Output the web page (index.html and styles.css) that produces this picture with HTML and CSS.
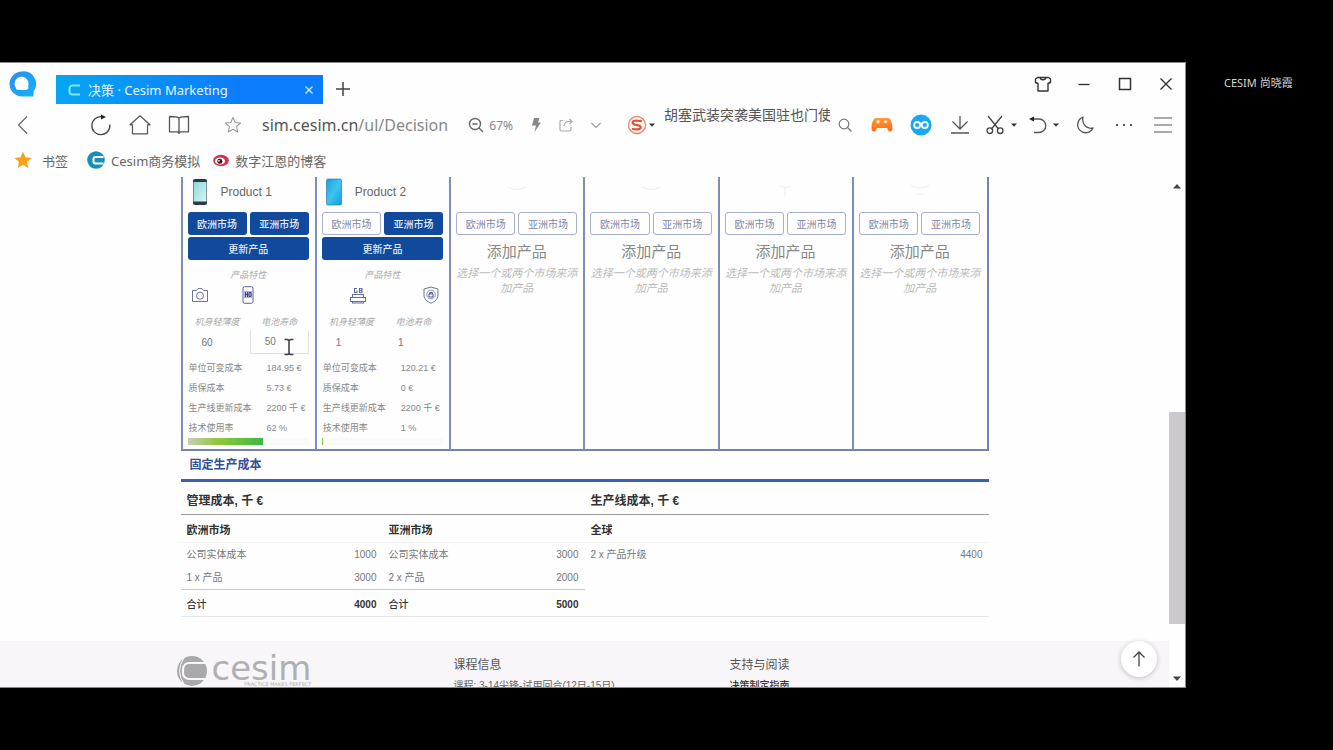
FILE: index.html
```html
<!DOCTYPE html>
<html lang="zh-CN">
<head>
<meta charset="utf-8">
<meta name="viewport" content="width=device-width, initial-scale=1">
<title>决策 · Cesim Marketing</title>
<link rel="stylesheet" href="styles.css">
</head>
<body>
<div class="window">
  <header class="titlebar">
    <svg class="browser-logo" viewBox="0 0 28 28" aria-hidden="true"><defs><linearGradient id="qg" x1="0" y1="0" x2="1" y2="1"><stop offset="0" stop-color="#2c8cf0"/><stop offset="1" stop-color="#12b4f6"/></linearGradient></defs><path d="M14 1.500a12.500 12.500 0 0 0 0 25h11.500v-5A12.500 12.500 0 0 0 14 1.500z" fill="url(#qg)"/><path d="M8 18a7 7 0 1 1 12-1.500c1 .5.500 3.500-2.500 3.500H10.500c-1.500 0-2.500-.7-2.500-2z" fill="#fff"/></svg>
    <div class="tab">
      <svg class="tab-icon" viewBox="0 0 14 14" aria-hidden="true"><path d="M13 2.500H5.500a3 3 0 0 0-3 3v3a3 3 0 0 0 3 3H13" fill="none" stroke="#7fe6ee" stroke-width="2"/></svg>
      <span class="tab-title">决策 · Cesim Marketing</span>
      <button class="tab-close" aria-label="关闭标签"><svg class="i10" viewBox="0 0 10 10"><path d="M1.500 1.500l7 7M8.500 1.500l-7 7" stroke="#d5ecff" stroke-width="1.300"/></svg></button>
    </div>
    <button class="tool tab-new" aria-label="新标签"><svg class="i16" viewBox="0 0 16 16"><path d="M8 1v14M1 8h14" stroke="#444" stroke-width="1.500"/></svg></button>
    <div class="window-controls">
      <button class="tool" aria-label="皮肤"><svg class="i18" viewBox="0 0 18 18"><path d="M6 2.500H3.500L1.500 4v3.500L4 8.500v7.500h10V8.500l2.500-1V4l-2-1.500H12c-.5 3-5.500 3-6 0zM6 2.500h6" fill="none" stroke="#333" stroke-width="1.400" stroke-linejoin="round"/></svg></button>
      <button class="tool" aria-label="最小化"><svg class="i14" viewBox="0 0 14 14"><path d="M1.500 7.500h11" stroke="#333" stroke-width="1.400"/></svg></button>
      <button class="tool" aria-label="最大化"><svg class="i14" viewBox="0 0 14 14"><rect x="1.500" y="1.500" width="11" height="11" fill="none" stroke="#333" stroke-width="1.500"/></svg></button>
      <button class="tool" aria-label="关闭"><svg class="i14" viewBox="0 0 14 14"><path d="M1.500 1.500l11 11M12.500 1.500l-11 11" stroke="#333" stroke-width="1.400"/></svg></button>
    </div>
  </header>

  <nav class="toolbar">
    <div class="nav-back"><button class="tool" aria-label="后退"><svg class="i20" viewBox="0 0 20 20"><path d="M14 1.500L5.500 10l8.500 8.500" fill="none" stroke="#666" stroke-width="1.200"/></svg></button></div>
    <button class="tool" aria-label="刷新"><svg class="i22" viewBox="0 0 22 22"><path d="M19.800 10.500A9 9 0 1 1 12.500 2.800" fill="none" stroke="#444" stroke-width="1.300"/><path d="M11 .5l5 2.500-5 2.500z" fill="#222"/></svg></button>
    <button class="tool" aria-label="主页"><svg class="i22" viewBox="0 0 22 22"><path d="M1 10.800L11 1.800l10 9h-2.500v9h-15v-9z" fill="none" stroke="#555" stroke-width="1.200" stroke-linejoin="round"/></svg></button>
    <button class="tool" aria-label="阅读"><svg class="i22" viewBox="0 0 22 22"><path d="M11 4C9.500 2.500 7 2.500 1.500 2.500v15.300h8l1.500 1.500 1.500-1.500h8V2.500C15 2.500 12.500 2.500 11 4zM11 4v15" fill="none" stroke="#555" stroke-width="1.300" stroke-linejoin="round"/></svg></button>
    <div class="address">
      <button class="tool" aria-label="收藏"><svg class="i18" viewBox="0 0 18 18"><path d="M9 1.500l2.200 5 5.300.5-4 3.600 1.200 5.400L9 13.200 4.300 16l1.200-5.400-4-3.600 5.300-.5z" fill="none" stroke="#999" stroke-width="1.100" stroke-linejoin="round"/></svg></button>
      <div class="url" role="textbox" aria-label="网址" tabindex="0">sim.cesim.cn<span class="url-path">/ul/Decision</span></div>
      <button class="zoom-level"><svg class="i16" viewBox="0 0 16 16"><circle cx="7" cy="7" r="5.500" fill="none" stroke="#666" stroke-width="1.400"/><path d="M4.500 7h5M11 11l4 4" stroke="#666" stroke-width="1.400"/></svg>67%</button>
      <button class="tool tool-narrow" aria-label="极速"><svg class="i14" viewBox="0 0 14 14"><path d="M5 0h5.500L9 4.500h3L5.500 14 7 7.500H3z" fill="#888"/></svg></button>
      <button class="tool tool-narrow" aria-label="分享"><svg class="i14" viewBox="0 0 14 14"><path d="M4 2.500H2A1 1 0 0 0 1 3.500v8a1.500 1.500 0 0 0 1.500 1.500h8a1.500 1.500 0 0 0 1.500-1.500V9M5 8c0-3 2-4.500 5-4.500h3M10.500 1L13 3.500 10.500 6" fill="none" stroke="#aaa" stroke-width="1.200"/></svg></button>
      <button class="tool tool-narrow" aria-label="展开"><svg class="i10" viewBox="0 0 10 10"><path d="M.5 3L5 7.500 9.500 3" fill="none" stroke="#999" stroke-width="1.100"/></svg></button>
    </div>
    <div class="search">
      <button class="search-engine" aria-label="搜索引擎"><svg class="i20" viewBox="0 0 20 20"><circle cx="10" cy="10" r="8.500" fill="#fff" stroke="#f0806a" stroke-width="1.300"/><path d="M15 6.300c-2-.6-4-.6-6-.6-4 0-4.500 3-1 3.900l3.500.8c3.500 1 3 3.900-1.500 3.900-2 0-3.500 0-5-.6" fill="none" stroke="#e8512f" stroke-width="2.200"/></svg><svg class="i6" viewBox="0 0 6 6"><path d="M0 1.500h6L3 4.800z" fill="#333"/></svg></button>
      <input class="search-input" type="text" aria-label="搜索" value="胡塞武装突袭美国驻也门使馆">
      <button class="tool tool-narrow" aria-label="查找"><svg class="i14" viewBox="0 0 14 14"><circle cx="6" cy="6" r="4.800" fill="none" stroke="#777" stroke-width="1.200"/><path d="M9.500 9.500l4 4" stroke="#777" stroke-width="1.200"/></svg></button>
    </div>
    <div class="extras">
      <button class="tool" aria-label="游戏"><svg class="i22" viewBox="0 0 22 22"><defs><linearGradient id="gg" x1="0" y1="0" x2="0" y2="1"><stop offset="0" stop-color="#ff9a3c"/><stop offset="1" stop-color="#ff6a12"/></linearGradient></defs><path d="M5 4h12c3 0 4.500 6 4.500 10.500 0 3.500-3 4-4.500 1.500l-1-2H6l-1 2C3.500 18.500.5 18 .5 14.500.5 10 2 4 5 4z" fill="url(#gg)"/><circle cx="7" cy="7.800" r="1.700" fill="#fff0dc"/><circle cx="14.500" cy="7.800" r="1.500" fill="#fff0dc"/></svg></button>
      <button class="tool" aria-label="插件"><svg class="i22" viewBox="0 0 22 22"><circle cx="11" cy="11" r="10.500" fill="#18a8f6"/><circle cx="7.200" cy="11" r="3" fill="none" stroke="#fff" stroke-width="1.800"/><circle cx="14.800" cy="11" r="3" fill="none" stroke="#fff" stroke-width="1.800"/></svg></button>
      <button class="tool" aria-label="下载"><svg class="i20" viewBox="0 0 20 20"><path d="M10 1v13M2.500 6.500L10 14l7.500-7.500M1 18h18" fill="none" stroke="#555" stroke-width="1.300"/></svg></button>
      <button class="tool tool-wide" aria-label="截图"><svg class="i20" viewBox="0 0 20 20"><path d="M3 1l10.500 13M17 1L6.500 14" stroke="#444" stroke-width="1.300"/><circle cx="4.800" cy="15.700" r="2.800" fill="none" stroke="#444" stroke-width="1.300"/><circle cx="15.200" cy="15.700" r="2.800" fill="none" stroke="#444" stroke-width="1.300"/></svg><svg class="i6" viewBox="0 0 6 6"><path d="M0 1.500h6L3 4.800z" fill="#333"/></svg></button>
      <button class="tool tool-wide" aria-label="恢复"><svg class="i18" viewBox="0 0 18 18"><path d="M2 3h8a6.500 6.500 0 0 1 0 13.500H5" fill="none" stroke="#555" stroke-width="1.300"/><path d="M0 3l5-2.400v4.800z" fill="#222"/></svg><svg class="i6" viewBox="0 0 6 6"><path d="M0 1.500h6L3 4.800z" fill="#333"/></svg></button>
      <button class="tool" aria-label="夜间"><svg class="i18" viewBox="0 0 18 18"><path d="M7 1.200A8 8 0 1 0 17 12C11 13.500 5.500 8 7 1.200z" fill="none" stroke="#555" stroke-width="1.300" stroke-linejoin="round"/></svg></button>
      <button class="tool" aria-label="更多"><svg class="i18" viewBox="0 0 18 18"><path d="M1 8h2v2H1zM8 8h2v2H8zM15 8h2v2h-2z" fill="#555"/></svg></button>
      <button class="tool" aria-label="菜单"><svg class="i18" viewBox="0 0 18 18"><path d="M0 2h18M0 9h18M0 16h18" stroke="#555" stroke-width="1.200"/></svg></button>
    </div>
  </nav>

  <nav class="bookmarks">
    <a class="bookmark" href="#"><svg class="i18" viewBox="0 0 18 18"><path d="M9 .8l2.500 5.500 6 .6-4.500 4 1.300 6L9 13.800 3.700 16.900l1.300-6-4.500-4 6-.6z" fill="#f9a11b"/></svg><span class="bookmark-first">书签</span></a>
    <a class="bookmark" href="#"><svg class="i18" viewBox="0 0 18 18"><circle cx="9" cy="9" r="8.800" fill="#1a8fb5"/><path d="M16.500 6H8.500a2 2 0 0 0-2 2v2.500a2 2 0 0 0 2 2h8" fill="none" stroke="#fff" stroke-width="2"/></svg><span>Cesim商务模拟</span></a>
    <a class="bookmark" href="#"><svg class="i16" viewBox="0 0 16 16"><ellipse cx="8" cy="8.500" rx="7.800" ry="5.800" fill="#d5304c"/><ellipse cx="7" cy="9" rx="5" ry="3.600" fill="#fff"/><circle cx="6.800" cy="9.200" r="2.500" fill="#42121c"/><circle cx="6" cy="8.800" r=".9" fill="#fff"/></svg><span>数字江恩的博客</span></a>
  </nav>

  <div class="viewport">
    <div class="page">
      <main class="content">
        <section class="board" aria-label="产品">
          <article class="product">
            <h2 class="product-name"><svg class="phone" viewBox="0 0 18 28"><defs><linearGradient id="p1" x1="0" y1="0" x2="1" y2="1"><stop offset="0" stop-color="#8fd8e2"/><stop offset="1" stop-color="#d8f4f4"/></linearGradient></defs><rect x="2" y="1" width="14" height="26" rx="2" fill="#2d3a42"/><rect x="2.500" y="4" width="13" height="19.500" fill="url(#p1)"/></svg>Product 1</h2>
            <div class="markets"><button class="market on">欧洲市场</button><button class="market on">亚洲市场</button></div>
            <button class="update">更新产品</button>
            <p class="feature-title">产品特性</p>
            <div class="features">
              <svg class="i18" viewBox="0 0 18 18"><path d="M1.500 4.500h4L7 2.500h4l1.500 2h4v11h-15z" fill="none" stroke="#7076a0" stroke-linejoin="round"/><circle cx="9" cy="9.700" r="3.500" fill="none" stroke="#7076a0"/></svg>
              <span></span>
              <svg class="i18" viewBox="0 0 18 18"><rect x="4" y=".7" width="10" height="16.600" rx="1.500" fill="none" stroke="#5b609c"/><path d="M5 5h8v7H5z" fill="#b4b7d8"/><path d="M6.500 6v5M6.500 8.500h2M8.500 6v5M10 6.500h2v4h-2z" fill="none" stroke="#343a80" stroke-width=".9"/></svg>
            </div>
            <div class="fields">
              <label class="field"><span>机身轻薄度</span><input type="text" value="60"></label>
              <label class="field active"><span>电池寿命</span><input type="text" value="50"><svg class="ibeam" viewBox="0 0 12 18"><path d="M1.500 1.500h3L6 2.500l1.500-1h3M6 2.500v13M1.500 16.500h3l1.500-1 1.500 1h3" fill="none" stroke="#444" stroke-width="1.600"/></svg></label>
            </div>
            <dl class="costs"><dt>单位可变成本</dt><dd>184.95 €</dd><dt>质保成本</dt><dd>5.73 €</dd><dt>生产线更新成本</dt><dd>2200 千 €</dd><dt>技术使用率</dt><dd>62 %</dd></dl>
            <progress class="usage" max="100" value="62" aria-label="技术使用率"></progress>
          </article>
          <article class="product">
            <h2 class="product-name"><svg class="phone" viewBox="0 0 18 28"><defs><linearGradient id="p2" x1="0" y1="0" x2="1" y2="1"><stop offset="0" stop-color="#18a2dc"/><stop offset=".5" stop-color="#3cc4f2"/><stop offset="1" stop-color="#149bdc"/></linearGradient></defs><rect x="1.500" y="1" width="15" height="26" rx="1.500" fill="url(#p2)" stroke="#1c6d98" stroke-width=".6"/></svg>Product 2</h2>
            <div class="markets"><button class="market">欧洲市场</button><button class="market on">亚洲市场</button></div>
            <button class="update">更新产品</button>
            <p class="feature-title">产品特性</p>
            <div class="features">
              <span></span>
              <svg class="i18" viewBox="0 0 18 18"><path d="M8 2.500H5.500v4H8v-2M10.500 2.500v4h2.500v-4zM10.500 4.500H13M3.500 8.500h11v3h-11zM1.500 11.500h15v4h-15zM3.500 15.500v1.500h11v-1.500" fill="none" stroke="#6469a0" stroke-width="1.100"/></svg>
              <span></span><span></span>
              <svg class="i18" viewBox="0 0 18 18"><path d="M9 1l7 2v6c0 4-3 6.500-7 8.200C5 15.500 2 13 2 9V3z" fill="none" stroke="#6c7399" stroke-linejoin="round"/><circle cx="9" cy="8.500" r="4.300" fill="none" stroke="#8d92b5"/><path d="M7 8h4v3H7zM7.700 8V6.500h2.600V8" fill="none" stroke="#4e5590"/></svg>
            </div>
            <div class="fields">
              <label class="field"><span>机身轻薄度</span><input type="text" value="1"></label>
              <label class="field"><span>电池寿命</span><input type="text" value="1"></label>
            </div>
            <dl class="costs"><dt>单位可变成本</dt><dd>120.21 €</dd><dt>质保成本</dt><dd>0 €</dd><dt>生产线更新成本</dt><dd>2200 千 €</dd><dt>技术使用率</dt><dd>1 %</dd></dl>
            <progress class="usage" max="100" value="1" aria-label="技术使用率"></progress>
          </article>
          <article class="product empty">
            <div class="slot"><svg class="i20" viewBox="0 0 20 20"><path d="M1 10q9 5 18 0" fill="none" stroke="#eee"/></svg></div>
            <div class="markets"><button class="market">欧洲市场</button><button class="market">亚洲市场</button></div>
            <h2 class="add">添加产品</h2><p class="hint">选择一个或两个市场来添加产品</p>
          </article>
          <article class="product empty">
            <div class="slot"><svg class="i20" viewBox="0 0 20 20"><path d="M1 10q9 5 18 0" fill="none" stroke="#eee"/></svg></div>
            <div class="markets"><button class="market">欧洲市场</button><button class="market">亚洲市场</button></div>
            <h2 class="add">添加产品</h2><p class="hint">选择一个或两个市场来添加产品</p>
          </article>
          <article class="product empty">
            <div class="slot"><svg class="i20" viewBox="0 0 20 20"><path d="M4 9q6 3 12 0M10 10v9" fill="none" stroke="#eee"/></svg></div>
            <div class="markets"><button class="market">欧洲市场</button><button class="market">亚洲市场</button></div>
            <h2 class="add">添加产品</h2><p class="hint">选择一个或两个市场来添加产品</p>
          </article>
          <article class="product empty">
            <div class="slot"><svg class="i20" viewBox="0 0 20 20"><path d="M1 8q9 6 18 0M6 17h8" fill="none" stroke="#eee"/></svg></div>
            <div class="markets"><button class="market">欧洲市场</button><button class="market">亚洲市场</button></div>
            <h2 class="add">添加产品</h2><p class="hint">选择一个或两个市场来添加产品</p>
          </article>
        </section>

        <h2 class="section-title">固定生产成本</h2>
        <section class="ledger">
          <div class="ledger-half">
            <h3 class="ledger-title">管理成本, 千 €</h3>
            <div class="ledger-tables">
              <table class="ledger-table">
                <thead><tr><th colspan="2">欧洲市场</th></tr></thead>
                <tbody><tr><td>公司实体成本</td><td>1000</td></tr><tr><td>1 x 产品</td><td>3000</td></tr></tbody>
                <tfoot><tr><td>合计</td><td>4000</td></tr></tfoot>
              </table>
              <table class="ledger-table">
                <thead><tr><th colspan="2">亚洲市场</th></tr></thead>
                <tbody><tr><td>公司实体成本</td><td>3000</td></tr><tr><td>2 x 产品</td><td>2000</td></tr></tbody>
                <tfoot><tr><td>合计</td><td>5000</td></tr></tfoot>
              </table>
            </div>
          </div>
          <div class="ledger-half">
            <h3 class="ledger-title">生产线成本, 千 €</h3>
            <table class="ledger-table">
              <thead><tr><th colspan="2">全球</th></tr></thead>
              <tbody><tr><td>2 x 产品升级</td><td>4400</td></tr></tbody>
            </table>
          </div>
        </section>
      </main>

      <footer class="footer">
        <div class="footer-inner">
          <div class="brand">
            <svg class="brand-mark" viewBox="0 0 32 32" aria-hidden="true"><circle cx="16" cy="16" r="15" fill="#a9a9ab"/><path d="M31 8H13a6 6 0 0 0-6 6v4a6 6 0 0 0 6 6h18" fill="none" stroke="#f8f6f9" stroke-width="2.200"/><path d="M8 3Q-1 16 8 29" fill="none" stroke="#f8f6f9" stroke-width="1"/></svg>
            <div class="brand-words"><span class="brand-name">cesim</span><span class="brand-tag">PRACTICE MAKES PERFECT</span></div>
          </div>
          <div class="footer-col"><h4>课程信息</h4><p>课程: 3-14尖锋-试用回合(12日-15日)</p></div>
          <div class="footer-col"><h4>支持与阅读</h4><p><a class="guide" href="#">决策制定指南</a></p></div>
        </div>
      </footer>
      <button class="to-top" aria-label="返回顶部"><svg class="i18" viewBox="0 0 18 18"><path d="M9 2v14.500M3.500 7.500L9 2l5.500 5.500" fill="none" stroke="#444" stroke-width="1.300"/></svg></button>
    </div>
    <div class="scrollbar" aria-hidden="true">
      <svg class="arrow" viewBox="0 0 16 18"><path d="M4 11.500L8 7l4 4.500z" fill="#444"/></svg>
      <span class="track-before"></span><span class="thumb"></span><span class="track-after"></span>
      <svg class="arrow" viewBox="0 0 16 18"><path d="M4 7.500h8L8 12z" fill="#444"/></svg>
    </div>
  </div>
</div>
<aside class="presenter">CESIM 尚晓霞</aside>
</body>
</html>
```
FILE: styles.css
```css
* {
  box-sizing: border-box;
}

body {
  margin: 0;
  height: 100vh;
  padding: 62px 0;
  display: grid;
  grid-template-columns: minmax(0, 1fr) 147px;
  background: #000;
  color: #555;
  font-family: "Noto Sans", "Noto Sans CJK SC", sans-serif;
  overflow: hidden;
}

h2, h3, h4, p, dl, dd {
  margin: 0;
}

button, input {
  font: inherit;
  color: inherit;
  border: 0;
  padding: 0;
  background: none;
}

svg {
  display: block;
  flex: none;
}

.i6 { width: 6px; height: 6px; }
.i10 { width: 10px; height: 10px; }
.i14 { width: 14px; height: 14px; }
.i16 { width: 16px; height: 16px; }
.i18 { width: 18px; height: 18px; }
.i20 { width: 20px; height: 20px; }
.i22 { width: 22px; height: 22px; }

.presenter {
  padding: 13px 0 0 38px;
  color: #d5d5d5;
  font-size: 11px;
  line-height: 16px;
}

.window {
  min-height: 0;
  display: flex;
  flex-direction: column;
  background: #fdfefd;
  border: solid #8a8a8a;
  border-width: 1px 1px 1px 0;
}

/* Title bar */
.titlebar {
  flex: none;
  height: 41px;
  display: flex;
  align-items: flex-end;
}

.browser-logo {
  width: 28px;
  height: 28px;
  margin: 0 20px 6px 8px;
}

.tab {
  width: 267px;
  height: 29px;
  padding: 0 9px 0 11px;
  display: flex;
  align-items: center;
  gap: 7px;
  background: linear-gradient(90deg, #06a6f2, #0b7cfc 70%);
  color: #e6f5ff;
  font-size: 13px;
}

.tab-icon {
  width: 14px;
  height: 14px;
}

.tab-title {
  flex: 1;
}

.tool {
  width: 39px;
  height: 30px;
  display: flex;
  align-items: center;
  justify-content: center;
}

.tool-narrow {
  width: 30px;
}

.tool-wide {
  width: 43px;
  gap: 6px;
}

.window-controls {
  margin-left: auto;
  display: flex;
  gap: 2px;
  align-self: center;
}

/* Toolbar */
.toolbar {
  flex: none;
  height: 42px;
  padding: 0 3px;
  display: flex;
  align-items: center;
}

.nav-back {
  width: 78px;
}

.address {
  flex: 1;
  margin-left: 15px;
  display: flex;
  align-items: center;
}

.url {
  flex: 1;
  padding-left: 10px;
  color: #555;
  font-size: 16px;
  line-height: 24px;
}

.url-path {
  color: #888;
}

.zoom-level {
  display: flex;
  align-items: center;
  gap: 5px;
  margin-right: 8px;
  color: #888;
  font-size: 12px;
}

.search {
  width: 251px;
  padding-left: 16px;
  display: flex;
  align-items: center;
}

.search-engine {
  display: flex;
  align-items: center;
  gap: 2px;
  margin-right: 9px;
}

.search-input {
  flex: none;
  width: 166px;
  height: 42px;
  padding-bottom: 22px;
  font-size: 14px;
}

.extras {
  display: flex;
}

/* Bookmarks */
.bookmarks {
  flex: none;
  height: 31px;
  padding: 0 14px 3px;
  display: flex;
  align-items: center;
  gap: 13px;
  font-size: 13px;
}

.bookmark {
  display: flex;
  align-items: center;
  gap: 6px;
  color: #666;
  text-decoration: none;
}

.bookmark-first {
  padding: 0 6px 0 4px;
}

/* Page area */
.viewport {
  flex: 1;
  min-height: 0;
  display: flex;
  font-family: "Liberation Sans", "Noto Sans CJK SC", sans-serif;
}

.page {
  position: relative;
  flex: 1;
  overflow: hidden;
}

.content {
  max-width: 808px;
  margin: 0 auto;
}

.board {
  display: grid;
  grid-template-columns: repeat(6, 1fr);
  border: solid #7484ae;
  border-width: 0 2px 2px 0;
}

.product {
  min-width: 0;
  padding: 0 6px 4px 5px;
  border-left: 2px solid #7c8fb8;
  font-size: 9px;
}

.product-name {
  height: 30px;
  display: flex;
  align-items: center;
  gap: 12px;
  padding-left: 3px;
  color: #666;
  font-size: 12px;
  font-weight: 400;
}

.phone {
  width: 18px;
  height: 28px;
}

.slot {
  height: 30px;
  display: flex;
  justify-content: center;
}

.markets {
  margin-top: 5px;
  display: grid;
  grid-template-columns: 1fr 1fr;
  gap: 3px;
}

.market {
  height: 23px;
  border: 1px solid #a6afcb;
  border-radius: 3px;
  background: #fff;
  color: #8187a6;
  font-size: 10px;
}

.market.on, .update {
  border: 0;
  background: #11499c;
  color: #dfe9fb;
  font-weight: 500;
}

.update {
  width: 100%;
  height: 23px;
  margin-top: 2px;
  display: block;
  border-radius: 3px;
  font-size: 10px;
}

.feature-title {
  margin-top: 7px;
  color: #aaa;
  font-style: italic;
  line-height: 16px;
  text-align: center;
}

.features {
  height: 24px;
  display: grid;
  grid-template-columns: repeat(5, 1fr);
  place-items: center;
}

.fields {
  margin-top: 7px;
  display: grid;
  grid-template-columns: 1fr 1fr;
  gap: 3px;
}

.field {
  position: relative;
  color: #aaa;
  text-align: center;
  line-height: 16px;
}

.field span {
  display: block;
  font-style: italic;
}

.field input {
  display: block;
  width: 100%;
  height: 24px;
  padding-left: 14px;
  color: #777;
  font-size: 10px;
}

.field.active input {
  border: solid #e2e2e2;
  border-width: 0 1px 1px;
}

.ibeam {
  position: absolute;
  right: 14px;
  bottom: -2px;
  width: 12px;
  height: 18px;
}

.costs {
  margin-top: 4px;
  padding-left: 1px;
  display: grid;
  grid-template-columns: 78px 1fr;
  color: #888;
  line-height: 20px;
  white-space: nowrap;
}

.usage {
  display: block;
  width: 100%;
  height: 7px;
  appearance: none;
  border: 0;
  background: #fafafa;
}

.usage::-webkit-progress-bar {
  background: #fafafa;
}

.usage::-webkit-progress-value {
  background: linear-gradient(90deg, #c8cdb8, #8fc838 40%, #3cb943);
}

.add {
  margin-top: 5px;
  color: #888;
  font-size: 15px;
  font-weight: 400;
  line-height: 24px;
  text-align: center;
}

.hint {
  margin-top: 2px;
  color: #bbb;
  font-size: 11px;
  font-style: italic;
  line-height: 15px;
  text-align: center;
}

/* Fixed costs */
.section-title {
  padding: 0 9px;
  border-bottom: 3px solid #3a62b2;
  color: #33509a;
  font-size: 12px;
  font-weight: 700;
  line-height: 28px;
}

.ledger {
  display: grid;
  grid-template-columns: 1fr 1fr;
  border-bottom: 1px solid #e6e6e6;
}

.ledger-title {
  padding: 6px 6px 0;
  border-bottom: 1px solid #999;
  color: #333;
  font-size: 12px;
  font-weight: 700;
  line-height: 26px;
}

.ledger-tables {
  display: grid;
  grid-template-columns: 1fr 1fr;
}

.ledger-table {
  width: 100%;
  border-collapse: collapse;
  color: #777;
  font-size: 10px;
  line-height: 23px;
}

.ledger-table th {
  padding: 4px 6px 0;
  border-bottom: 1px solid #f3f3f3;
  color: #333;
  font-size: 11px;
  text-align: left;
}

.ledger-table td {
  padding: 0 6px;
}

.ledger-table td:last-child {
  text-align: right;
}

.ledger-table tfoot td {
  padding-top: 3px;
  border-top: 1px solid #ccc;
  color: #333;
}

.ledger-table tfoot td:first-child {
  font-weight: 500;
}

.ledger-table tfoot td:last-child {
  font-weight: 700;
}

/* Footer */
.footer {
  margin-top: 24px;
  height: 120px;
  background: #f8f6f9;
}

.footer-inner {
  max-width: 828px;
  margin: 0 auto;
  display: grid;
  grid-template-columns: repeat(3, 1fr);
}

.brand {
  display: flex;
  gap: 4px;
  padding: 14px 5px 0;
}

.brand-mark {
  width: 32px;
  height: 32px;
}

.brand-words {
  color: #b0b0b2;
  font-family: "DejaVu Sans", sans-serif;
}

.brand-name {
  display: block;
  font-size: 34px;
  line-height: 26px;
}

.brand-tag {
  display: block;
  font-size: 5px;
  line-height: 6px;
  text-align: right;
}

.footer-col {
  padding: 14px 7px 0;
  color: #666;
  font-size: 10px;
  line-height: 22px;
}

.footer-col h4 {
  color: #555;
  font-size: 12px;
  font-weight: 400;
  line-height: 20px;
}

.guide {
  color: #333;
  font-weight: 500;
  text-decoration: none;
}

.to-top {
  position: absolute;
  right: 12px;
  bottom: 10px;
  width: 36px;
  height: 36px;
  display: flex;
  align-items: center;
  justify-content: center;
  border-radius: 50%;
  background: #fff;
  box-shadow: 0 1px 5px #bbb;
}

/* Scrollbar */
.scrollbar {
  width: 16px;
  display: flex;
  flex-direction: column;
}

.arrow {
  width: 16px;
  height: 18px;
}

.track-before { flex: 218; }
.thumb { flex: 213; background: #cbc8ce; }
.track-after { flex: 45; }
```
